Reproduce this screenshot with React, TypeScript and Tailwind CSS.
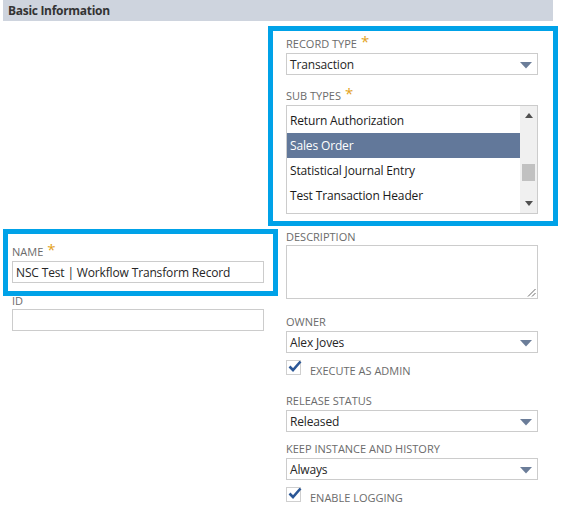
import React from "react";

const Arrow = () => (
  <svg width="12" height="7" viewBox="0 0 12 7" className="absolute right-[5px] top-[8px]">
    <polygon points="0,0 12,0 6,6.5" fill="#6b7d99" />
  </svg>
);

const Label = ({ text, req, className = "" }: { text: string; req?: boolean; className?: string }) => (
  <div className={"text-[11px] leading-[12px] h-[12px] text-[#6b6b6b] uppercase whitespace-nowrap mb-[3px] " + className}>
    {text}
    {req && (
      <span className="relative">
        <span className="absolute left-[4px] top-[-2px] text-[#e3a21a] text-[15px] leading-[15px]">*</span>
      </span>
    )}
  </div>
);

const Select = ({ value }: { value: string }) => (
  <div className="relative w-[252px] h-[22px] border border-[#cccccc] bg-white pl-[3px] text-[12px] tracking-[-0.15px] leading-[21px] text-[#262626]">
    {value}
    <Arrow />
  </div>
);

const Check = () => (
  <div className="relative w-[15px] h-[15px] border border-[#cfcfcf] bg-white flex-none">
    <svg width="14" height="12" viewBox="0 0 14 12" className="absolute left-[1px] top-[-1px]">
      <path d="M1.5 6.5 L5 10 L12.5 1.5" stroke="#2b5797" strokeWidth="2.6" fill="none" />
    </svg>
  </div>
);

export default function App() {
  const items = ["Return Authorization", "Sales Order", "Statistical Journal Entry", "Test Transaction Header"];
  return (
    <div className="w-[579px] h-[506px] bg-white overflow-hidden font-['Open_Sans',sans-serif]">
      <div className="ml-[3px] w-[550px] h-[21px] bg-[#ced4de] pl-[5px] text-[12px] tracking-[-0.3px] font-bold leading-[21px] text-[#333333]">
        Basic Information
      </div>
      <div className="flex ml-[3px]">
        {/* left column */}
        <div className="w-[265px] flex-none pt-[208px]">
          <div className="w-[275px] border-[5px] border-[#00a2e8] pl-[4px] pt-[12px] pb-[8px]">
            <Label text="Name" req />
            <div className="w-[252px] h-[22px] border border-[#cccccc] pl-[3px] text-[12px] tracking-[-0.15px] leading-[21px] text-[#262626] whitespace-nowrap">
              NSC Test | Workflow Transform Record
            </div>
          </div>
          <div className="pl-[9px]">
            <Label text="ID" className="mt-[-1px] !mb-[2px]" />
            <div className="w-[252px] h-[22px] border border-[#cccccc]" />
          </div>
        </div>
        {/* right column */}
        <div className="w-[290px] flex-none pt-[5px]">
          <div className="border-[5px] border-[#00a2e8] pl-[13px] pr-[15px] pt-[7px] pb-[7px]">
            <Label text="Record Type" req />
            <Select value="Transaction" />
            <Label text="Sub Types" req className="mt-[15px]" />
            <div className="flex w-[252px] h-[109px] border border-[#cccccc] bg-white">
              <div className="flex-1 pt-[2px]">
                {items.map((it) => (
                  <div
                    key={it}
                    className={
                      "h-[25px] pl-[3px] text-[12px] tracking-[-0.15px] leading-[25px] whitespace-nowrap " +
                      (it === "Sales Order" ? "bg-[#62789a] text-white" : "text-[#1a1a1a]")
                    }
                  >
                    {it}
                  </div>
                ))}
              </div>
              <div className="w-[17px] h-full bg-[#f0f0f0] flex flex-col items-center">
                <svg width="8" height="5" viewBox="0 0 8 5" className="mt-[7px]">
                  <polygon points="0,5 8,5 4,0" fill="#505050" />
                </svg>
                <div className="w-[13px] h-[17px] bg-[#c1c1c1] mt-[46px]" />
                <svg width="8" height="5" viewBox="0 0 8 5" className="mt-[20px]">
                  <polygon points="0,0 8,0 4,5" fill="#505050" />
                </svg>
              </div>
            </div>
          </div>
          <div className="pl-[18px]">
            <Label text="Description" className="mt-[5px] !mb-[2px]" />
            <div className="relative w-[252px] h-[54px] border border-[#cccccc]">
              <svg width="9" height="9" viewBox="0 0 9 9" className="absolute right-[1px] bottom-[1px]">
                <line x1="8.5" y1="1" x2="1" y2="8.5" stroke="#6a6a6a" strokeWidth="1" />
                <line x1="8.5" y1="5" x2="5" y2="8.5" stroke="#6a6a6a" strokeWidth="1" />
              </svg>
            </div>
            <Label text="Owner" className="mt-[17px]" />
            <Select value="Alex Joves" />
            <div className="flex items-start mt-[7px]">
              <Check />
              <div className="ml-[9px] mt-[5px] text-[11px] leading-[12px] text-[#6b6b6b]">EXECUTE AS ADMIN</div>
            </div>
            <Label text="Release Status" className="mt-[18px]" />
            <Select value="Released" />
            <Label text="Keep Instance and History" className="mt-[11px]" />
            <Select value="Always" />
            <div className="flex items-start mt-[7px]">
              <Check />
              <div className="ml-[9px] mt-[5px] text-[11px] leading-[12px] text-[#6b6b6b]">ENABLE LOGGING</div>
            </div>
          </div>
        </div>
      </div>
    </div>
  );
}
